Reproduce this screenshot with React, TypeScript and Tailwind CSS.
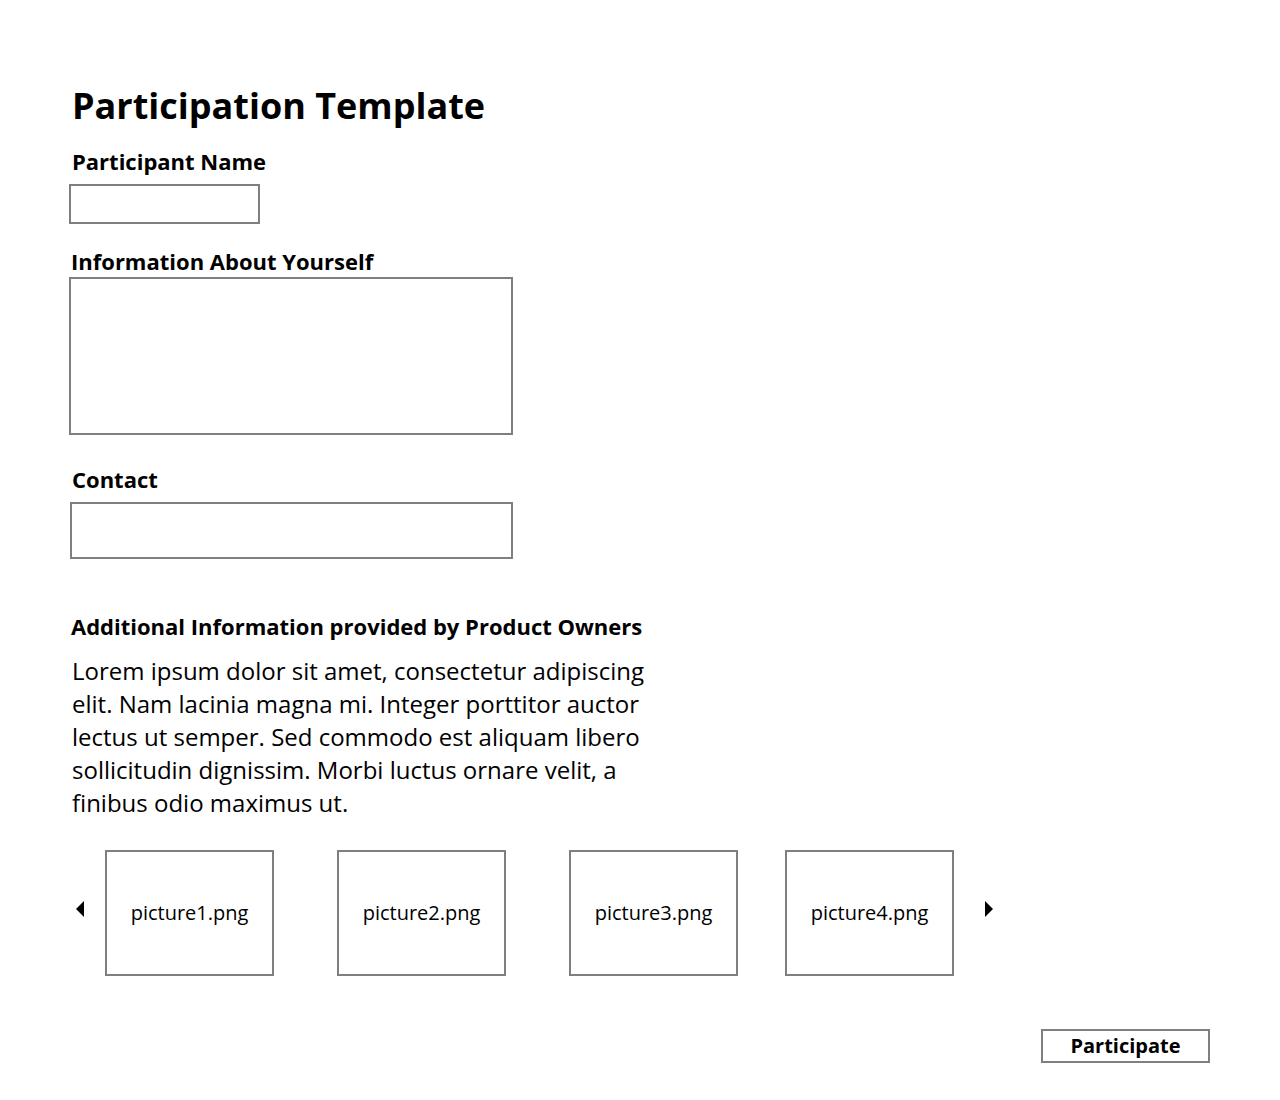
const pictures = ["picture1.png", "picture2.png", "picture3.png", "picture4.png"];

function Arrow({ dir }: { dir: "left" | "right" }) {
  return (
    <svg width="8" height="16" viewBox="0 0 8 16" className="shrink-0">
      {dir === "left" ? <polygon points="8,0 8,16 0,8" fill="#000" /> : <polygon points="0,0 0,16 8,8" fill="#000" />}
    </svg>
  );
}

export default function App() {
  return (
    <div className="min-h-[1100px] w-[1280px] bg-white text-black font-['Open_Sans',sans-serif]">
      <div className="flex flex-col pl-[72px] pt-[82px]">
        <h1 className="text-[36px] font-bold leading-[48px]">Participation Template</h1>

        <label className="mt-[16px] text-[22px] font-bold leading-[30px]">Participant Name</label>
        <input className="mt-[8px] -ml-[3px] h-[40px] w-[191px] border-2 border-[#7f7f7f] outline-none" />

        <label className="mt-[22px] -ml-[1px] text-[22px] font-bold leading-[30px]">Information About Yourself</label>
        <textarea className="mt-[1px] -ml-[3px] h-[158px] w-[444px] resize-none border-2 border-[#7f7f7f] outline-none" />

        <label className="mt-[29px] text-[22px] font-bold leading-[30px]">Contact</label>
        <input className="mt-[8px] -ml-[2px] h-[57px] w-[443px] border-2 border-[#7f7f7f] outline-none" />

        <h2 className="mt-[52px] -ml-[1px] text-[22px] font-bold leading-[30px]">
          Additional Information provided by Product Owners
        </h2>
        <p className="mt-[13px] w-[590px] text-[24px] leading-[33px]">
          Lorem ipsum dolor sit amet, consectetur adipiscing elit. Nam lacinia magna mi. Integer porttitor auctor
          lectus ut semper. Sed commodo est aliquam libero sollicitudin dignissim. Morbi luctus ornare velit, a finibus
          odio maximus ut.
        </p>

        <div className="mt-[31px] flex items-center">
          <div className="ml-[4px] -mt-[9px]">
            <Arrow dir="left" />
          </div>
          <div className="ml-[21px] flex gap-[63px]">
            {pictures.slice(0, 3).map((p) => (
              <div
                key={p}
                className="flex h-[126px] w-[169px] items-center justify-center border-2 border-[#7f7f7f] text-[20px]"
              >
                {p}
              </div>
            ))}
          </div>
          <div className="ml-[47px] flex h-[126px] w-[169px] items-center justify-center border-2 border-[#7f7f7f] text-[20px]">
            {pictures[3]}
          </div>
          <div className="ml-[31px] -mt-[9px]">
            <Arrow dir="right" />
          </div>
        </div>

        <div className="mt-[53px] flex justify-end pr-[70px]">
          <button className="h-[34px] w-[169px] border-2 border-[#7f7f7f] text-[20px] font-bold leading-none">
            Participate
          </button>
        </div>
      </div>
    </div>
  );
}
